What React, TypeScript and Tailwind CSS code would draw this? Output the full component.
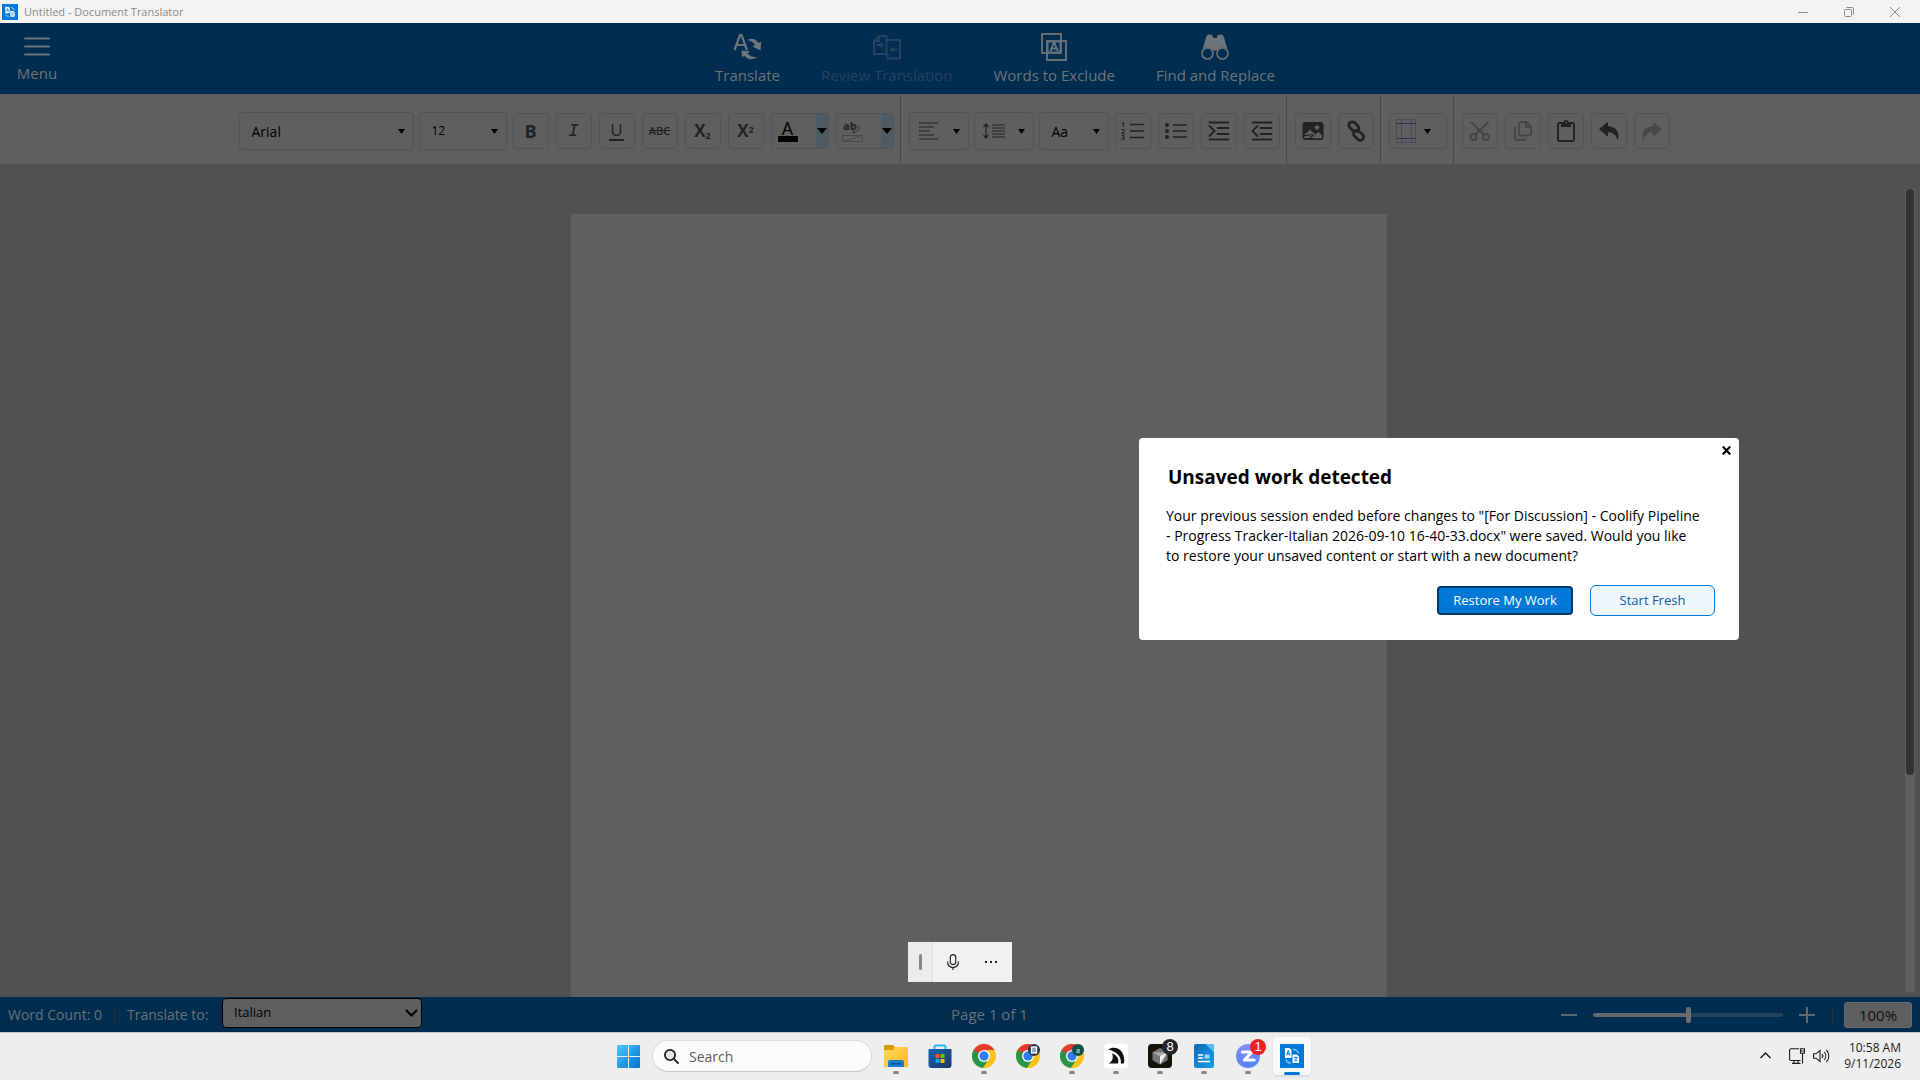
import type { ReactNode } from 'react';

const btn = 'flex h-9 w-9 shrink-0 items-center justify-center rounded border border-[#545454] text-[#222222]';
const wideBtn = 'flex h-[38px] shrink-0 items-center justify-between rounded border border-[#545454] pr-2 text-black';

function Caret({ className = 'h-[5px] w-[7px]' }: { className?: string }) {
  return (
    <svg className={className} viewBox="0 0 8 5" preserveAspectRatio="none" fill="currentColor" aria-hidden="true">
      <path d="M0 0h8L4 5z" />
    </svg>
  );
}

function ToolButton({ label, disabled, children }: { label: string; disabled?: boolean; children: ReactNode }) {
  return (
    <button type="button" aria-label={label} disabled={disabled} className={btn}>
      {children}
    </button>
  );
}

function Divider() {
  return <div className="-mt-0.5 ml-1.5 mr-2 w-px self-stretch bg-[#484848]" />;
}

function TitleBar() {
  return (
    <div className="flex h-[23px] shrink-0 items-center bg-[#f3f3f3] text-[#8a8a8a]">
      <div className="ml-0.5 h-4 w-4">
        <TranslatorLogo size={16} />
      </div>
      <h1 className="ml-1.5 flex-1 text-[11px] leading-4">Untitled - Document Translator</h1>
      <div className="flex h-5 pr-0.5">
        <button type="button" aria-label="Minimize" className="flex w-[46px] items-center justify-center">
          <svg width="10" height="10" viewBox="0 0 10 10" stroke="currentColor" aria-hidden="true"><path d="M0 5.500h10" /></svg>
        </button>
        <button type="button" aria-label="Restore" className="flex w-[46px] items-center justify-center">
          <svg width="10" height="10" viewBox="0 0 10 10" fill="none" stroke="currentColor" aria-hidden="true">
            <rect x=".5" y="2.500" width="7" height="7" rx="1" />
            <path d="M2.500.5H8a1.500 1.500 0 0 1 1.500 1.500v5.500" />
          </svg>
        </button>
        <button type="button" aria-label="Close window" className="flex w-[46px] items-center justify-center">
          <svg width="10" height="10" viewBox="0 0 10 10" stroke="currentColor" aria-hidden="true"><path d="M0 0l10 10M10 0L0 10" /></svg>
        </button>
      </div>
    </div>
  );
}

function TranslatorLogo({ size }: { size: number }) {
  return (
    <svg width={size} height={size} viewBox="0 0 24 24" aria-hidden="true">
      <rect width="24" height="24" fill="#0078d7" />
      <path d="M5 4h4.500l2 2v8H5z" fill="#fff" />
      <path d="M6.600 11.500l1.700-5 1.700 5M7.200 10h2.200" fill="none" stroke="#0078d7" strokeWidth="1" />
      <path d="M12.500 10.500h4.500l2 2v6.500h-6.500z" fill="#fff" />
      <path d="M13.800 13.500h4M15.800 12.500v1M17 13.800c-.5 1.800-1.500 2.800-3 3.500M14.700 14.500c.5 1.300 1.500 2.300 2.800 2.800" fill="none" stroke="#0078d7" strokeWidth=".8" />
      <path d="M13 5.500c3 0 4.800 1.500 5 4M11 18.500c-3 0-4.800-1.500-5-4M5.500 16a8 8 0 0 0 5 4M13.500 5a8 8 0 0 1 5.500 4" fill="none" stroke="#b8dcf8" strokeWidth=".8" />
    </svg>
  );
}

function RibbonButton({ label, disabled, children }: { label: string; disabled?: boolean; children: ReactNode }) {
  return (
    <button type="button" disabled={disabled} className="flex flex-col items-center text-[#6d747a] disabled:text-[#23435e]">
      <span className="flex h-[30px] items-center">{children}</span>
      <span className="mt-[3px] text-[15px] leading-5 whitespace-nowrap">{label}</span>
    </button>
  );
}

function Ribbon() {
  return (
    <header className="flex h-[71px] shrink-0 items-start bg-[#002d50] pt-[9px]">
      <button type="button" className="flex w-[74px] flex-col items-center text-[#6d747a]">
        <svg className="mt-[5px]" width="26" height="20" viewBox="0 0 26 20" stroke="currentColor" strokeWidth="2" strokeLinecap="round" aria-hidden="true">
          <path d="M1 1.500h24M1 9.500h24M1 17.500h24" />
        </svg>
        <span className="mt-1.5 text-[15px] leading-5">Menu</span>
      </button>
      <nav className="flex flex-1 justify-center gap-[41px] pr-1">
        <RibbonButton label="Translate">
          <svg width="30" height="28" viewBox="0 0 30 28" aria-hidden="true">
            <path d="M1.500 17L7 2h1.500L14 17M3.600 12h8.300" fill="none" stroke="currentColor" strokeWidth="2.200" />
            <path d="M14 7c5-2.500 9-1 11.300 3l3-1.500-.8 9-8.200-4 2.800-1.300C20.500 9.500 18 7.600 14 7z" fill="currentColor" />
            <path d="M24.500 24c-5 3.500-10.500 2.500-13.300-1.500L9 24.800 8.500 17.500l8.500.8-2.500 2.200c2.500 2.800 6 3.800 10 3.500z" fill="currentColor" />
          </svg>
        </RibbonButton>
        <RibbonButton label="Review Translation" disabled>
          <svg width="28" height="26" viewBox="0 0 28 26" fill="none" stroke="currentColor" strokeWidth="2" aria-hidden="true">
            <path d="M6 2h7.500v18H1V7zM6 2v5H1" />
            <path d="M13.500 6H27v18.500H14.500V20" />
            <path d="M3.500 11h5" /><path d="M7.500 7.800l4 3.200-4 3.200z" fill="currentColor" stroke="none" />
            <path d="M24.500 15.500h-5" /><path d="M20.500 12.300l-4 3.200 4 3.200z" fill="currentColor" stroke="none" />
          </svg>
        </RibbonButton>
        <RibbonButton label="Words to Exclude">
          <svg width="26" height="28" viewBox="0 0 26 28" fill="none" stroke="currentColor" strokeWidth="1.800" aria-hidden="true">
            <rect x="1" y="1" width="19" height="19" /><rect x="6" y="8" width="19" height="19" />
            <rect x="7" y="9" width="12" height="10" strokeWidth="1" />
            <path d="M9.300 18.500l3.400-8.500h.8l3.400 8.500M10.500 15.500h5.200" />
          </svg>
        </RibbonButton>
        <RibbonButton label="Find and Replace">
          <svg width="28" height="26" viewBox="0 0 28 26" aria-hidden="true">
            <path d="M5 3.500C5.500 1 7 .5 9 .5s3 1 3.300 3.500h3.400C16 1.500 17 .5 19 .5s3.500.5 4 3l3.700 12.500A6.500 6.500 0 0 0 16 16.500h-4A6.500 6.500 0 0 0 1.300 16z" fill="currentColor" />
            <circle cx="6.500" cy="19.500" r="5.500" fill="#002d50" stroke="currentColor" strokeWidth="1.600" />
            <circle cx="21.500" cy="19.500" r="5.500" fill="#002d50" stroke="currentColor" strokeWidth="1.600" />
          </svg>
        </RibbonButton>
      </nav>
    </header>
  );
}

function Toolbar() {
  return (
    <div role="toolbar" aria-label="Formatting" className="flex h-[70px] shrink-0 items-stretch justify-center bg-[#5f5f5f] pr-3 pt-1 text-[#222222]">
      <div className="flex items-center">
        <div className="relative flex items-center">
          <select aria-label="Font" className="h-[38px] w-[175px] appearance-none rounded border border-[#545454] bg-transparent pl-3 text-[14px] text-black">
            <option>Arial</option>
          </select>
          <Caret className="pointer-events-none absolute right-[9px] h-[5px] w-[7px] text-black" />
        </div>
        <div className="relative ml-[5px] mr-1.5 flex items-center">
          <select aria-label="Font size" className="h-[38px] w-[88px] appearance-none rounded border border-[#545454] bg-transparent pl-3 text-[12px] text-black">
            <option>12</option>
          </select>
          <Caret className="pointer-events-none absolute right-[9px] h-[5px] w-[7px] text-black" />
        </div>
        <div className="flex gap-[7px]">
          <ToolButton label="Bold"><span className="text-[18px] font-bold leading-6">B</span></ToolButton>
          <ToolButton label="Italic"><span className="font-['Liberation_Mono',monospace] text-[18px] italic leading-6">I</span></ToolButton>
          <ToolButton label="Underline">
            <span className="border-b-2 border-current px-px text-[17px] leading-[18px]">U</span>
          </ToolButton>
          <ToolButton label="Strikethrough"><span className="text-[11px] font-semibold line-through leading-4">ABC</span></ToolButton>
          <ToolButton label="Subscript"><span className="text-[17px] font-bold leading-6">X<sub className="text-[9px]">2</sub></span></ToolButton>
          <ToolButton label="Superscript"><span className="text-[17px] font-bold leading-6">X<sup className="text-[9px]">2</sup></span></ToolButton>
          <div className="flex h-9 w-[58px] rounded border border-[#545454]">
            <button type="button" aria-label="Font color" className="flex flex-1 flex-col items-center justify-center text-black">
              <span className="text-[18px] leading-4">A</span>
              <span className="h-1.5 w-5 bg-black" />
            </button>
            <span className="w-3" />
            <button type="button" aria-label="Choose font color" className="flex w-3 items-center justify-center rounded-r bg-[#4f5a62] text-black"><Caret className="h-1.5 w-2.5" /></button>
          </div>
          <div className="flex h-9 w-[58px] rounded border border-[#545454]">
            <button type="button" aria-label="Highlight" className="flex flex-1 items-center justify-center">
              <svg className="overflow-visible" width="22" height="24" viewBox="0 0 22 24" aria-hidden="true">
                <text x="1" y="11" fontSize="11" fontWeight="700" fill="#222">ab</text>
                <path d="M11 14l1-3 4-4 2 2-4 4z" fill="none" stroke="#333" />
                <path d="M.5 16.500h20v6H.5zM1 22.500l19-6" fill="none" stroke="#484848" />
              </svg>
            </button>
            <span className="w-3" />
            <button type="button" aria-label="Choose highlight color" className="flex w-3 items-center justify-center rounded-r bg-[#4f5a62] text-black"><Caret className="h-1.5 w-2.5" /></button>
          </div>
        </div>
      </div>
      <Divider />
      <div className="flex items-center">
        <div className="mr-1.5 flex gap-[5px]">
          <button type="button" aria-label="Alignment" className={`${wideBtn} w-[60px] pl-[9px]`}>
            <svg width="19" height="18" viewBox="0 0 19 18" stroke="#222" strokeWidth="1.200" aria-hidden="true"><path d="M0 1h19M0 5h15M0 9h11M0 13h15M0 17h19" /></svg>
            <Caret />
          </button>
          <button type="button" aria-label="Line spacing" className={`${wideBtn} w-[60px] pl-2`}>
            <svg width="22" height="16" viewBox="0 0 22 16" fill="none" stroke="#222" strokeWidth="1.200" aria-hidden="true">
              <path d="M3 1v14M.5 4L3 1l2.500 3M.5 12L3 15l2.500-3M9 2h13M9 5h13M9 8h13M9 11h13M9 14h13" />
            </svg>
            <Caret />
          </button>
          <button type="button" aria-label="Change case" className={`${wideBtn} w-[70px] pl-3`}>
            <span className="text-[14px]">Aa</span>
            <Caret />
          </button>
        </div>
        <div className="flex gap-[7px]">
          <ToolButton label="Numbered list">
            <svg width="24" height="20" viewBox="0 0 24 20" aria-hidden="true">
              <path d="M9 3.500h14M9 10h14M9 16.500h14" stroke="currentColor" strokeWidth="1.700" />
              <g fontSize="7" fontWeight="700" fill="currentColor"><text x="0" y="6">1</text><text x="0" y="12.500">2</text><text x="0" y="19">3</text></g>
            </svg>
          </ToolButton>
          <ToolButton label="Bulleted list">
            <svg width="24" height="18" viewBox="0 0 24 18" aria-hidden="true">
              <path d="M9 3h14M9 9h14M9 15h14" stroke="currentColor" strokeWidth="1.700" />
              <g fill="currentColor"><circle cx="3" cy="3" r="2" /><circle cx="3" cy="9" r="2" /><circle cx="3" cy="15" r="2" /></g>
            </svg>
          </ToolButton>
          <ToolButton label="Increase indent">
            <svg width="22" height="20" viewBox="0 0 22 20" fill="none" stroke="currentColor" strokeWidth="1.800" strokeLinecap="round" aria-hidden="true"><path d="M1.500 1.500h19M9.500 7h11M9.500 13h11M1.500 18.500h19M1.500 5l5 5-5 5" /></svg>
          </ToolButton>
          <ToolButton label="Decrease indent">
            <svg width="22" height="20" viewBox="0 0 22 20" fill="none" stroke="currentColor" strokeWidth="1.800" strokeLinecap="round" aria-hidden="true"><path d="M1.500 1.500h19M9.500 7h11M9.500 13h11M1.500 18.500h19M6.500 5l-5 5 5 5" /></svg>
          </ToolButton>
        </div>
      </div>
      <Divider />
      <div className="flex items-center gap-[7px]">
        <ToolButton label="Insert image">
          <svg width="22" height="20" viewBox="0 0 22 20" aria-hidden="true">
            <rect x=".5" y="1" width="21" height="18" rx="3" fill="currentColor" />
            <circle cx="15" cy="6.500" r="2.300" fill="#5f5f5f" />
            <path d="M2 14l6-5.500 4.500 4.500M2 15.500V17h5.500l5-5 .8.800L9 17.200h11v-2.700l-3.500-3.500-3 2.500" fill="#5f5f5f" />
          </svg>
        </ToolButton>
        <ToolButton label="Insert link">
          <svg width="22" height="22" viewBox="0 0 24 24" fill="none" stroke="currentColor" strokeWidth="3" strokeLinecap="round" aria-hidden="true">
            <path d="M8.500 11.500l-3.300-3.300a4 4 0 0 1 0-5.200 4 4 0 0 1 5.700.3l3 3a4 4 0 0 1 0 5.600l-1 .6" />
            <path d="M15.500 12.500l3.800 3.300a4 4 0 0 1-.5 5.700 4 4 0 0 1-5.200-.8l-3-3a4 4 0 0 1 0-5.600l1-.6" />
          </svg>
        </ToolButton>
      </div>
      <Divider />
      <div className="flex items-center">
        <button type="button" aria-label="Page margins" className="flex h-9 w-[58px] items-center gap-2 rounded border border-[#545454] pl-1.5 text-black">
          <svg width="20" height="24" viewBox="0 0 20 24" fill="none" aria-hidden="true">
            <rect x=".5" y=".5" width="19" height="23" stroke="#464646" strokeDasharray="2 1" />
            <path d="M5.500 0v24M15.500 0v24" stroke="#414e5c" /><path d="M0 4.500h20M0 19.500h20" stroke="#2a3a4a" />
          </svg>
          <Caret />
        </button>
      </div>
      <Divider />
      <div className="flex items-center gap-[7px]">
        <ToolButton label="Cut" disabled>
          <svg width="22" height="20" viewBox="0 0 22 20" fill="none" stroke="#464646" strokeWidth="2" strokeLinecap="round" aria-hidden="true">
            <circle cx="4.500" cy="16" r="3" /><circle cx="17" cy="16" r="3" /><path d="M2.500 1.500L15 13.500M19 1.500L6.500 13.500" />
          </svg>
        </ToolButton>
        <ToolButton label="Copy" disabled>
          <svg width="20" height="20" viewBox="0 0 20 20" fill="none" stroke="#464646" strokeWidth="1.800" strokeLinejoin="round" aria-hidden="true">
            <path d="M8 1h5.500L18 5.500v7a2 2 0 0 1-2 2H8a2 2 0 0 1-2-2V3a2 2 0 0 1 2-2zM13 1v5h5M3.500 5.500A2 2 0 0 0 2 7.500v9A2.500 2.500 0 0 0 4.500 19H11a2 2 0 0 0 2-1.500" />
          </svg>
        </ToolButton>
        <ToolButton label="Paste">
          <svg width="20" height="22" viewBox="0 0 20 22" aria-hidden="true">
            <rect x="2" y="3" width="16" height="18" rx="1.500" fill="none" stroke="currentColor" strokeWidth="2" />
            <path d="M5 2.500h2.500a2.500 2.500 0 0 1 5 0H15V7H5z" fill="currentColor" /><circle cx="10" cy="2.500" r=".8" fill="#5f5f5f" />
          </svg>
        </ToolButton>
        <ToolButton label="Undo">
          <svg width="20" height="18" viewBox="0 0 20 18" fill="currentColor" aria-hidden="true"><path d="M.5 6.800L8 .5c.5-.4 1 0 1 .5v3.200c7 .3 10.500 4.500 10.500 10.300 0 1-.2 2-.5 2.800-.3.400-.8.300-.9-.2C17 13 14.500 10.500 9 10.300V13.500c0 .7-.6 1-1 .6L.5 7.800a.8.800 0 0 1 0-1z" /></svg>
        </ToolButton>
        <ToolButton label="Redo" disabled>
          <svg className="-scale-x-100" width="20" height="18" viewBox="0 0 20 18" fill="#484848" aria-hidden="true"><path d="M.5 6.800L8 .5c.5-.4 1 0 1 .5v3.200c7 .3 10.500 4.500 10.500 10.300 0 1-.2 2-.5 2.800-.3.400-.8.300-.9-.2C17 13 14.500 10.500 9 10.300V13.500c0 .7-.6 1-1 .6L.5 7.800a.8.800 0 0 1 0-1z" /></svg>
        </ToolButton>
      </div>
    </div>
  );
}

function StatusBar() {
  return (
    <footer className="flex h-[35px] shrink-0 items-center bg-[#002d50] text-[14px] text-[#6a7278]">
      <span className="ml-2 w-[94px] whitespace-nowrap">Word Count: 0</span>
      <span className="ml-3 h-5 w-px bg-[#1c3040]" />
      <label htmlFor="target" className="ml-3 w-[95px] whitespace-nowrap">Translate to:</label>
      <div className="relative mb-[3px] flex items-center">
        <select id="target" className="h-[30px] w-[200px] appearance-none rounded border border-black bg-[#5f5f5f] pl-[11px] text-[13px] text-black">
          <option>Italian</option>
        </select>
        <svg className="pointer-events-none absolute right-1" width="13" height="8" viewBox="0 0 13 8" fill="none" stroke="#000" strokeWidth="2" aria-hidden="true"><path d="M1 1l5.500 5.500L12 1" /></svg>
      </div>
      <span className="flex-1 pr-1 text-center text-[15px]">Page 1 of 1</span>
      <button type="button" aria-label="Zoom out" className="mr-4 flex h-4 w-4 items-center"><span className="h-0.5 w-4 bg-[#5f6970]" /></button>
      <input
        type="range"
        aria-label="Zoom"
        defaultValue={50}
        className="h-1 w-[190px] appearance-none rounded-full bg-[linear-gradient(to_right,#65696c_50%,#27435a_50%)] [&::-webkit-slider-thumb]:h-4 [&::-webkit-slider-thumb]:w-[5px] [&::-webkit-slider-thumb]:appearance-none [&::-webkit-slider-thumb]:rounded-xs [&::-webkit-slider-thumb]:bg-[#696d70]"
      />
      <button type="button" aria-label="Zoom in" className="ml-4">
        <svg width="16" height="16" viewBox="0 0 16 16" stroke="#65696c" strokeWidth="2" aria-hidden="true"><path d="M0 8h16M8 0v16" /></svg>
      </button>
      <span className="ml-[17px] h-5 w-px bg-[#1c3040]" />
      <button type="button" className="ml-[11px] mr-2 h-[26px] w-[68px] rounded-[3px] border border-[#6a6a6a] bg-[#5f5f5f] text-[15px] leading-5 text-[#111111]">100%</button>
    </footer>
  );
}

function Chrome({ badge }: { badge?: ReactNode }) {
  return (
    <svg width="24" height="24" viewBox="0 0 24 24" aria-hidden="true">
      <circle cx="12" cy="12" r="12" fill="#fbc116" />
      <path d="M12 12L1.600 6A12 12 0 0 0 11 24l5.700-9z" fill="#26974a" />
      <path d="M1.600 6A12 12 0 0 1 22.400 6H12l-5.200 9z" fill="#e33b2e" />
      <path d="M1.600 6l5.200 9L12 12z" fill="#26974a" />
      <circle cx="12" cy="12" r="6" fill="#fff" />
      <circle cx="12" cy="12" r="4.700" fill="#2f7df0" />
      {badge}
    </svg>
  );
}

function TaskItem({ label, running, children }: { label: string; running?: boolean; children: ReactNode }) {
  return (
    <button type="button" aria-label={label} className="relative flex h-full w-11 items-center justify-center">
      {children}
      {running && <span className="absolute bottom-[5px] h-[3px] w-1.5 rounded-full bg-[#858585]" />}
    </button>
  );
}

function Taskbar() {
  return (
    <nav aria-label="Taskbar" className="grid h-12 shrink-0 grid-cols-[1fr_auto_1fr] border-t border-[#bfc4c9] bg-[#eeeeee]">
      <div />
      <div className="flex items-center pb-px">
        <TaskItem label="Start">
          <svg width="23" height="23" viewBox="0 0 23 23" aria-hidden="true">
            <defs>
              <linearGradient id="win" x1="0" y1="0" x2="1" y2="1"><stop stopColor="#4cc9fb" /><stop offset="1" stopColor="#0070d0" /></linearGradient>
            </defs>
            <path d="M1 0h10v11H0V1a1 1 0 0 1 1-1zM12 0h10a1 1 0 0 1 1 1v10H12zM0 12h11v11H1a1 1 0 0 1-1-1zM12 12h11v10a1 1 0 0 1-1 1H12z" fill="url(#win)" />
          </svg>
        </TaskItem>
        <label className="ml-0.5 mr-0.5 flex h-8 w-[220px] items-center rounded-full border border-[#dcdcdc] border-b-[#c8c8c8] bg-[#fbfbfb] pl-[11px]">
          <svg width="15" height="15" viewBox="0 0 15 15" fill="none" stroke="#222" strokeWidth="1.800" strokeLinecap="round" aria-hidden="true">
            <circle cx="6" cy="6" r="5.100" fill="#e8e8e8" /><path d="M10 10l4 4" />
          </svg>
          <input type="text" aria-label="Search" placeholder="Search" className="ml-2.5 w-40 bg-transparent text-[14px] text-[#5d5d5d] placeholder:text-[#5d5d5d]" />
        </label>
        <TaskItem label="File Explorer" running>
          <svg width="24" height="22" viewBox="0 0 24 22" aria-hidden="true">
            <defs>
              <linearGradient id="fold" x1="0" y1="0" x2="1" y2="1"><stop stopColor="#ffd75e" /><stop offset="1" stopColor="#fbb917" /></linearGradient>
            </defs>
            <path d="M1 0h8l2 2v3H0V1z" fill="#d99a06" />
            <path d="M0 5h9l2-3h12a1 1 0 0 1 1 1v18a1 1 0 0 1-1 1H1a1 1 0 0 1-1-1z" fill="url(#fold)" />
            <path d="M4 22v-5a2 2 0 0 1 2-2h12a2 2 0 0 1 2 2v5z" fill="#1a7fd0" /><path d="M7 18h10v1.500H7z" fill="#0b5599" />
          </svg>
        </TaskItem>
        <TaskItem label="Microsoft Store">
          <svg width="24" height="24" viewBox="0 0 24 24" aria-hidden="true">
            <defs>
              <linearGradient id="store" x1="0" y1="0" x2="1" y2="1"><stop stopColor="#1168b4" /><stop offset="1" stopColor="#22345f" /></linearGradient>
            </defs>
            <path d="M6.500 6V3a1.500 1.500 0 0 1 1.500-1.500h8A1.500 1.500 0 0 1 17.500 3v3" fill="none" stroke="#28b7f0" strokeWidth="2" />
            <path d="M.5 5h23v16a3 3 0 0 1-3 3h-17a3 3 0 0 1-3-3z" fill="url(#store)" />
            <path d="M7.500 10h4v4h-4z" fill="#f25022" /><path d="M12.500 10h4v4h-4z" fill="#7fba00" /><path d="M7.500 15h4v4h-4z" fill="#00a4ef" /><path d="M12.500 15h4v4h-4z" fill="#ffb900" />
          </svg>
        </TaskItem>
        <TaskItem label="Chrome" running><Chrome /></TaskItem>
        <TaskItem label="Chrome, second profile">
          <Chrome badge={<g><circle cx="18" cy="6" r="6" fill="#22344e" /><rect x="15.500" y="3" width="5" height="6" fill="#8aa0b8" stroke="#fff" strokeWidth="1.300" /></g>} />
        </TaskItem>
        <TaskItem label="Chrome, third profile" running>
          <Chrome badge={<g><circle cx="18" cy="6" r="6" fill="#0b5345" /><text x="18" y="8.500" fontSize="7" textAnchor="middle" fill="#fff">a</text></g>} />
        </TaskItem>
        <TaskItem label="Media app" running>
          <svg width="24" height="24" viewBox="0 0 24 24" aria-hidden="true">
            <rect width="24" height="24" rx="4" fill="#fff" />
            <path d="M4 5.500C12 .5 22 6.500 20 19.500h-3C17.500 12 12.500 7.500 4 5.500z" fill="#111" />
            <path d="M8 9.500c5 1.500 7.500 5.500 6 10H4.500C8 18 10 14 8 9.500z" fill="#111" />
          </svg>
        </TaskItem>
        <TaskItem label="Cursor, 8 notifications" running>
          <svg width="24" height="24" viewBox="0 0 24 24" aria-hidden="true">
            <rect width="24" height="24" rx="4" fill="#14120b" />
            <path d="M12 4l7.500 4.200v8L12 20.500l-7.500-4.300v-8z" fill="#777" /><path d="M4.500 8.200H19.500L12 12z" fill="#aaa" /><path d="M19.500 8.200L12 20.500V12z" fill="#eee" />
          </svg>
          <span className="absolute right-1 top-1.5 flex h-4 w-4 items-center justify-center rounded-full bg-[#22252d] font-['Liberation_Sans',sans-serif] text-[13px] leading-4 text-white">8</span>
        </TaskItem>
        <TaskItem label="LibreOffice Writer" running>
          <svg width="20" height="24" viewBox="0 0 20 24" aria-hidden="true">
            <defs>
              <linearGradient id="wr" x1="0" y1="0" x2="1" y2="1"><stop stopColor="#0d6cb8" /><stop offset="1" stopColor="#1a9ee8" /></linearGradient>
            </defs>
            <path d="M2 0h10l8 8v14a2 2 0 0 1-2 2H2a2 2 0 0 1-2-2V2a2 2 0 0 1 2-2z" fill="url(#wr)" /><path d="M12 0h7a1 1 0 0 1 1 1v7z" fill="#53bdf2" />
            <path d="M4 11h5M4 14h5M4 17.500h12" stroke="#fff" strokeWidth="1.300" /><path d="M10.500 10.500h5v4h-5z" fill="#9fd8fa" />
          </svg>
        </TaskItem>
        <TaskItem label="Messages, 1 notification" running>
          <svg width="24" height="24" viewBox="0 0 24 24" aria-hidden="true">
            <defs>
              <linearGradient id="msg" x1="0" y1="0" x2="0" y2="1"><stop stopColor="#8b8cf5" /><stop offset="1" stopColor="#4f86f7" /></linearGradient>
            </defs>
            <circle cx="12" cy="12" r="12" fill="url(#msg)" />
            <path d="M6.500 8H16l-7.500 8H18" fill="none" stroke="#fff" strokeWidth="3.200" strokeLinecap="round" strokeLinejoin="round" />
          </svg>
          <span className="absolute right-1 top-1.5 flex h-4 w-4 items-center justify-center rounded-full bg-[#ee2020] font-['Liberation_Sans',sans-serif] text-[13px] leading-4 text-white">1</span>
        </TaskItem>
        <button type="button" aria-label="Document Translator" className="relative mx-[3px] flex h-[38px] w-[38px] items-center justify-center rounded bg-[#f8f8f8] shadow-sm">
          <TranslatorLogo size={24} />
          <span className="absolute bottom-0 h-[3px] w-4 rounded-full bg-[#0078d7]" />
        </button>
      </div>
      <div className="flex items-center justify-end pb-0.5 pr-[19px] text-[#1b1b1b]">
        <button type="button" aria-label="Show hidden icons" className="mr-[18px]">
          <svg width="11" height="7" viewBox="0 0 11 7" fill="none" stroke="currentColor" strokeWidth="1.500" aria-hidden="true"><path d="M.5 6l5-5 5 5" /></svg>
        </button>
        <button type="button" aria-label="Network" className="mr-2">
          <svg width="16" height="16" viewBox="0 0 16 16" fill="none" stroke="currentColor" strokeWidth="1.100" aria-hidden="true">
            <path d="M10 .7H2A1.500 1.500 0 0 0 .6 2v9A1.500 1.500 0 0 0 2 12.500h9.500M5 12.500v3M9 12.500v3M3 15.400h8.500M11.500.7h4v4.500h-4zM11.500 3h4M13.500 5.500v10" />
          </svg>
        </button>
        <button type="button" aria-label="Volume" className="w-[17px]">
          <svg width="17" height="14" viewBox="0 0 17 14" fill="none" stroke="currentColor" strokeWidth="1.100" aria-hidden="true">
            <path d="M.6 4.800h2.500L7 1.500v11L3.100 9.200H.6zM9 5a3 3 0 0 1 0 4M11.200 3a6 6 0 0 1 0 8M13.400 1a8.500 8.500 0 0 1 0 12" />
          </svg>
        </button>
        <div className="w-[71px] text-right text-[12px] leading-4 whitespace-nowrap"><div>10:58 AM</div><div>9/11/2026</div></div>
      </div>
    </nav>
  );
}

function RestoreDialog() {
  return (
    <section role="dialog" aria-labelledby="dlg-title" className="absolute right-[181px] top-[438px] w-[600px] rounded bg-white pb-6 pl-[27px] pr-6 pt-[25px] text-black">
      <button type="button" aria-label="Close" className="absolute right-[7px] top-[7px] flex h-[11px] w-[11px] items-center justify-center">
        <svg width="9" height="9" viewBox="0 0 9 9" stroke="#000" strokeWidth="2.200" aria-hidden="true"><path d="M.8.500l7.400 8M8.200.500l-7.400 8" /></svg>
      </button>
      <h2 id="dlg-title" className="pl-0.5 text-[19px] font-bold leading-7">Unsaved work detected</h2>
      <p className="mt-[15px] text-[14px] leading-5">
        Your previous session ended before changes to "[For Discussion] - Coolify Pipeline
        <br />- Progress Tracker-Italian 2026-09-10 16-40-33.docx" were saved. Would you like
        <br />to restore your unsaved content or start with a new document?
      </p>
      <div className="mt-[19px] flex items-center justify-end gap-[17px] text-[13px]">
        <button type="button" className="flex h-[29px] w-[136px] items-center justify-center rounded border-2 border-[#003a6b] bg-[#0078d7] text-white">
          <span className="whitespace-nowrap">Restore My Work</span>
        </button>
        <button type="button" className="h-[31px] w-[125px] rounded-md border border-[#0078d7] bg-[#eff5fc] text-[#0f5a9c]">Start Fresh</button>
      </div>
    </section>
  );
}

function DictationBar() {
  return (
    <div className="absolute bottom-[98px] left-1/2 flex h-10 w-[104px] -translate-x-1/2 bg-[#f1f1f1] text-[#222222]">
      <div className="flex w-[25px] items-center justify-center border-r border-[#dddddd] bg-[#ececec]"><span className="h-4 w-[3px] rounded-full bg-[#858585]" /></div>
      <button type="button" aria-label="Dictate" className="flex w-10 items-center justify-center">
        <svg width="12" height="16" viewBox="0 0 12 16" fill="none" stroke="currentColor" strokeWidth="1.200" aria-hidden="true">
          <rect x="3.300" y=".6" width="5.400" height="10" rx="2.700" /><path d="M.6 7.500v.7a5.400 5.400 0 0 0 10.800 0v-.7M6 13.500V16" />
        </svg>
      </button>
      <button type="button" aria-label="More" className="flex flex-1 items-center justify-center pr-1">
        <svg width="12" height="2" viewBox="0 0 12 2" fill="currentColor" aria-hidden="true"><path d="M0 0h2v2H0zM5 0h2v2H5zM10 0h2v2h-2z" /></svg>
      </button>
    </div>
  );
}

export default function App() {
  return (
    <div className="relative flex h-screen flex-col overflow-hidden font-['Open_Sans',sans-serif]">
      <TitleBar />
      <Ribbon />
      <Toolbar />
      <main className="flex min-h-0 flex-1 bg-[#515151]">
        <div className="flex flex-1 justify-center pl-[52px] pt-[50px]">
          <div role="textbox" aria-label="Document page" className="w-[816px] bg-[#5f5f5f]" />
        </div>
        <div className="mb-[5px] mr-[5px] mt-[25px] w-2.5 bg-[#5f5f5f] px-px">
          <div className="h-[73%] rounded bg-[#333333]" />
        </div>
      </main>
      <StatusBar />
      <Taskbar />
      <DictationBar />
      <RestoreDialog />
    </div>
  );
}
